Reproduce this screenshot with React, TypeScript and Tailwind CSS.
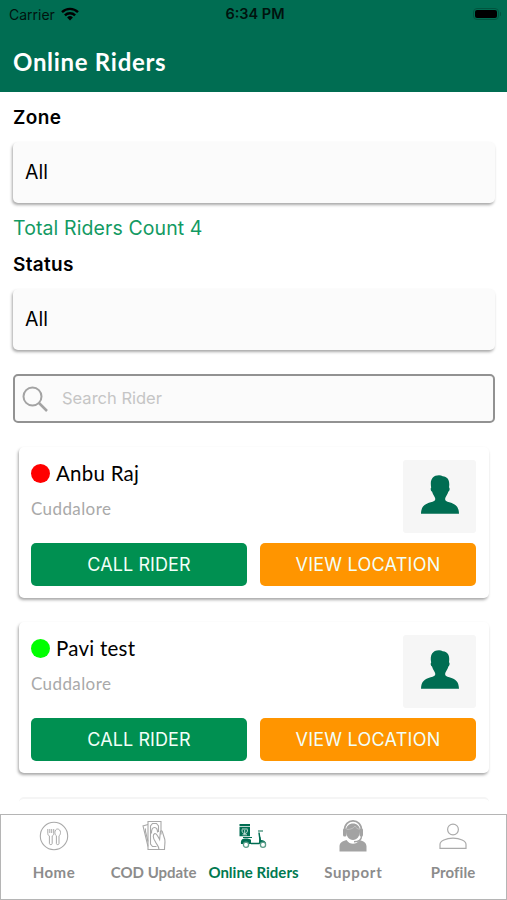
import type { ReactNode } from 'react'

interface Rider {
  name: string
  area: string
  online: boolean
}

interface Tab {
  label: string
  icon: ReactNode
  active?: boolean
  labelClass: string
}

const riders: Rider[] = [
  { name: 'Anbu Raj', area: 'Cuddalore', online: false },
  { name: 'Pavi test', area: 'Cuddalore', online: true },
]

function WifiIcon() {
  return (
    <svg viewBox="0 0 18 14" className="h-[14px] w-[18px]" fill="none" stroke="#000" strokeWidth="2.4">
      <path d="M1 5.2a11.4 11.4 0 0 1 16 0" />
      <path d="M3.9 8.3a7.2 7.2 0 0 1 10.2 0" />
      <path d="M9 13.5 6.1 10.5a4.2 4.2 0 0 1 5.8 0Z" fill="#000" stroke="none" />
    </svg>
  )
}

function PersonIcon() {
  return (
    <svg viewBox="0 0 38 39" className="h-[39px] w-[38px]" fill="#006d52">
      <path d="M14.3 24c0-2-2.500-4.300-3.300-7.500-1.500-.7-1.600-3.500-.8-4C8.700 5 11.500.3 18 .3c1.500 0 2.700.3 3.700 1 5.300.3 7.400 4.700 6.300 11 1 .6.800 3.500-.6 4.200-.8 3.200-3.300 5.500-3.300 7.500 0 1.800 1.500 2.500 4.200 3.300 6.200 1.800 9.500 4.200 9.700 11.400H0c.2-7.200 3.500-9.600 9.700-11.400 2.900-.8 4.600-1.500 4.600-3.300Z" />
    </svg>
  )
}

function HomeIcon() {
  return (
    <svg viewBox="0 0 30 30" className="size-[30px]" fill="none" stroke="#a9a9a9">
      <circle cx="15" cy="15" r="13.700" strokeWidth="1.100" />
      <path d="M8.800 8v4.500c0 1.500.8 2.200 1.600 2.400v7.600c0 1.500 2.800 1.500 2.800 0v-7.600c.8-.2 1.500-.9 1.500-2.400V8M10.800 8v4M12.700 8v4" />
      <path d="M18.500 8c-1.600 0-2.600 1.500-2.600 3.500 0 1.600.6 2.800 1.500 3.300v7.700c0 1.500 2.600 1.500 2.600 0v-7.700c.9-.5 1.500-1.700 1.500-3.300 0-2-1.400-3.500-3-3.500Z" />
    </svg>
  )
}

function CashIcon() {
  return (
    <svg viewBox="0 0 26 32" className="h-[32px] w-[26px]" fill="none" stroke="#a9a9a9" strokeWidth="1.100">
      <path d="M7 4.500 2 6l5 20.500" />
      <path d="M4.500 8.500v3l2.500 10" />
      <path d="M18 29.500H7v-28h13v13" />
      <path d="M9.500 22V6l2-2.500h4l2 2.500v6M9.500 22v2l2 2.500h4" />
      <path d="M10.500 13.500c-.2-4 1-6 3-6s3.200 2 3 5" />
      <path d="M14 21c-2-3-2.500-6.500-.2-7.500 1.800-.3 3 2.500 4.800 6l.8-8c.5-1 1.800-1 2 .5l2.400 7.500c.6 3-.3 5-.3 10H18c0-3.500-2.200-4.500-4-8.500Z" />
    </svg>
  )
}

function ScooterIcon() {
  return (
    <svg viewBox="0 0 28 26" className="h-[26px] w-[28px]" fill="#006d52">
      <path d="M.5 1h10.500v2H.5zM.5 3.800h10.500v9.500H.5z" />
      <path d="M3 6h5.500M3 6.500c0 3 1 4 2.700 4s2.800-1 2.800-4M5.700 7v4.500M3.500 11.800h4.500" stroke="#d7ebe4" strokeWidth=".9" fill="none" />
      <path d="M4 14h9v1H4zM3 16.500c2-1.500 8-1 9 .5v4H2c-.3-1.800 0-3.500 1-4.500Z" />
      <path d="M12 20.500h8c1.500-1 1.500-3 .7-6L20 9.500" stroke="#006d52" strokeWidth="1.500" fill="none" />
      <path d="M19 8h5" stroke="#5a9d89" strokeWidth="1.500" />
      <path d="m20.500 11 1.500 6c2.500.2 5 1.500 5.200 3.700h-7.200Z" />
      <g fill="#fff" stroke="#5a9d89" strokeWidth="1.300">
        <circle cx="7" cy="21.800" r="2.600" />
        <circle cx="24" cy="21.800" r="2.600" />
      </g>
    </svg>
  )
}

function SupportIcon() {
  return (
    <svg viewBox="0 0 28 32" className="h-[32px] w-[28px]" fill="#a3a3a3">
      <path d="M5.500 11C5-2.500 23-2.500 22.500 11" fill="none" stroke="#a3a3a3" strokeWidth="1.700" />
      <path d="M7 11C6.500 1 21.500 1 21 11c0 5-3 9-7 9s-7-4-7-9Z" />
      <rect x="4" y="8.500" width="3.500" height="8" rx="1.500" />
      <rect x="20.500" y="8.500" width="3.500" height="8" rx="1.500" />
      <path d="M7.700 9.500c4.500 0 7-1.500 8.300-3.500 1 2 2.500 3 4.500 3.300" fill="none" stroke="#c5c5c5" strokeWidth=".8" />
      <path d="M22.500 16c0 3.800-3 5.700-7.500 5.700" fill="none" stroke="#a3a3a3" strokeWidth="1.400" />
      <path d="M.5 31.500v-5c0-4 3-5.200 7-6.500 2 2.700 4 3.800 6.500 3.800s4.500-1.100 6.500-3.800c4 1.300 7 2.500 7 6.500v5Z" />
    </svg>
  )
}

function ProfileIcon() {
  return (
    <svg viewBox="0 0 28 28" className="size-[28px]" fill="none" stroke="#ababab" strokeWidth="1.200">
      <circle cx="14" cy="7.500" r="5.400" />
      <path d="M1 26.400v-4c0-3.600 6-6.200 13-6.200s13 2.600 13 6.200v4Z" />
    </svg>
  )
}

const tabs: Tab[] = [
  { label: 'Home', icon: <HomeIcon />, labelClass: 'tracking-[0.5px]' },
  { label: 'COD Update', icon: <CashIcon />, labelClass: 'tracking-[0px]' },
  { label: 'Online Riders', icon: <ScooterIcon />, active: true, labelClass: 'tracking-[0px]' },
  { label: 'Support', icon: <SupportIcon />, labelClass: 'tracking-[0.7px]' },
  { label: 'Profile', icon: <ProfileIcon />, labelClass: 'tracking-[0.1px]' },
]

function SelectBox({ value }: { value: string }) {
  return (
    <div className="ml-[13px] mr-3 flex h-[61px] items-center rounded-[5px] bg-[#fbfbfb] px-3 text-[19.500px] shadow-[-1px_2px_3px_rgba(0,0,0,0.34)]">
      {value}
    </div>
  )
}

function RiderCard({ rider }: { rider: Rider }) {
  return (
    <div className="ml-[19px] mr-[18px] h-[151px] shrink-0 rounded-[5px] bg-white pl-3 pr-[13px] pt-[13px] shadow-[-1px_2px_3px_rgba(0,0,0,0.34)]">
      <div className="flex h-[73px] justify-between">
        <div>
          <div className="-mt-px flex h-7 items-center gap-[6px]">
            <span className={`size-[19px] rounded-full ${rider.online ? 'bg-[#00ff00]' : 'bg-[#ff0000]'}`} />
            <span className="font-[Lato] text-[20.500px] leading-7 tracking-[0.25px]">{rider.name}</span>
          </div>
          <div className="mt-[10px] font-[Lato] text-[17px] leading-6 tracking-[0.4px] text-[#a9a9a9]">{rider.area}</div>
        </div>
        <div className="flex size-[73px] justify-center rounded-[3px] bg-[#f6f6f6] pt-[15px]">
          <PersonIcon />
        </div>
      </div>
      {/* Actions */}
      <div className="mt-[10px] grid grid-cols-2 gap-[13px] text-[18px] tracking-[0.1px] text-[#f2fff8]">
        <button className="h-[43px] rounded-[5px] bg-[#009051]">CALL RIDER</button>
        <button className="h-[43px] rounded-[5px] bg-[#ff9500] tracking-[0.25px]">VIEW LOCATION</button>
      </div>
    </div>
  )
}

export default function App() {
  return (
    <div className="flex h-[900px] w-[507px] flex-col overflow-hidden bg-white font-[Inter,sans-serif] text-black">
      {/* Header */}
      <header className="h-[92px] shrink-0 bg-[#006d52]">
        <div className="grid h-7 grid-cols-3 items-center pl-[9px] pr-[6px] text-[14px]">
          <div className="flex items-center gap-[6px] text-[#00130e]">
            Carrier
            <WifiIcon />
          </div>
          <div className="whitespace-nowrap text-center text-[14.500px] font-semibold text-[#00130e]">6:34 PM</div>
          <div className="flex items-center justify-end gap-px">
            <div className="h-3 w-[26px] rounded-[4px] border border-[#00553f] p-px">
              <div className="h-full rounded-[2px] bg-black" />
            </div>
            <div className="h-1 w-px rounded-r bg-[#00553f]" />
          </div>
        </div>
        <h1 className="ml-[13px] mt-[18px] font-[Lato] text-[24px] font-bold leading-8 tracking-[0.7px] text-white">
          Online Riders
        </h1>
      </header>

      <main className="flex min-h-0 flex-1 flex-col">
        <div className="ml-[13px] mt-[14px] text-[19px] font-semibold leading-6 tracking-[0.4px]">Zone</div>
        <div className="mt-3">
          <SelectBox value="All" />
        </div>
        <div className="ml-[13px] mt-[13px] text-[19.500px] leading-6 tracking-[0.1px] text-[#129a63]">
          Total Riders Count 4
        </div>
        <div className="ml-[13px] mt-[13px] text-[19px] font-semibold leading-6 tracking-[0.3px]">Status</div>
        <div className="mt-3">
          <SelectBox value="All" />
        </div>
        <div className="ml-[13px] mr-3 mt-6 flex h-[49px] shrink-0 items-center gap-[14px] rounded-[5px] border-2 border-[#929292] bg-[#fbfbfb] pl-[7px]">
          <svg viewBox="0 0 26 26" className="size-[26px]" fill="none" stroke="#a3a3a3" strokeWidth="2">
            <circle cx="10.500" cy="10.500" r="9" />
            <path d="m17 17 8 8" strokeWidth="2.500" />
          </svg>
          <span className="text-[16.500px] text-[#c5c5c5]">Search Rider</span>
        </div>

        <div className="mt-[14px] flex min-h-0 flex-1 flex-col gap-6 overflow-hidden pt-[10px]">
          {riders.map((r) => (
            <RiderCard key={r.name} rider={r} />
          ))}
          <div className="ml-[19px] mr-[18px] h-10 shrink-0 rounded-[5px] border-t-2 border-[#f5f5f5]" />
        </div>
      </main>

      {/* Bottom tabs */}
      <nav className="grid h-[86px] shrink-0 grid-cols-5 border border-[#b5b5b5] bg-white px-[3px]">
        {tabs.map((tab) => (
          <div key={tab.label} className="flex flex-col items-center pt-1">
            <div className="flex h-[34px] items-center">{tab.icon}</div>
            <span
              className={`mt-[9px] whitespace-nowrap font-[Lato] text-[15px] font-bold leading-5 ${tab.labelClass} ${
                tab.active ? 'text-[#007950]' : 'text-[#8c8c8c]'
              }`}
            >
              {tab.label}
            </span>
          </div>
        ))}
      </nav>
    </div>
  )
}
